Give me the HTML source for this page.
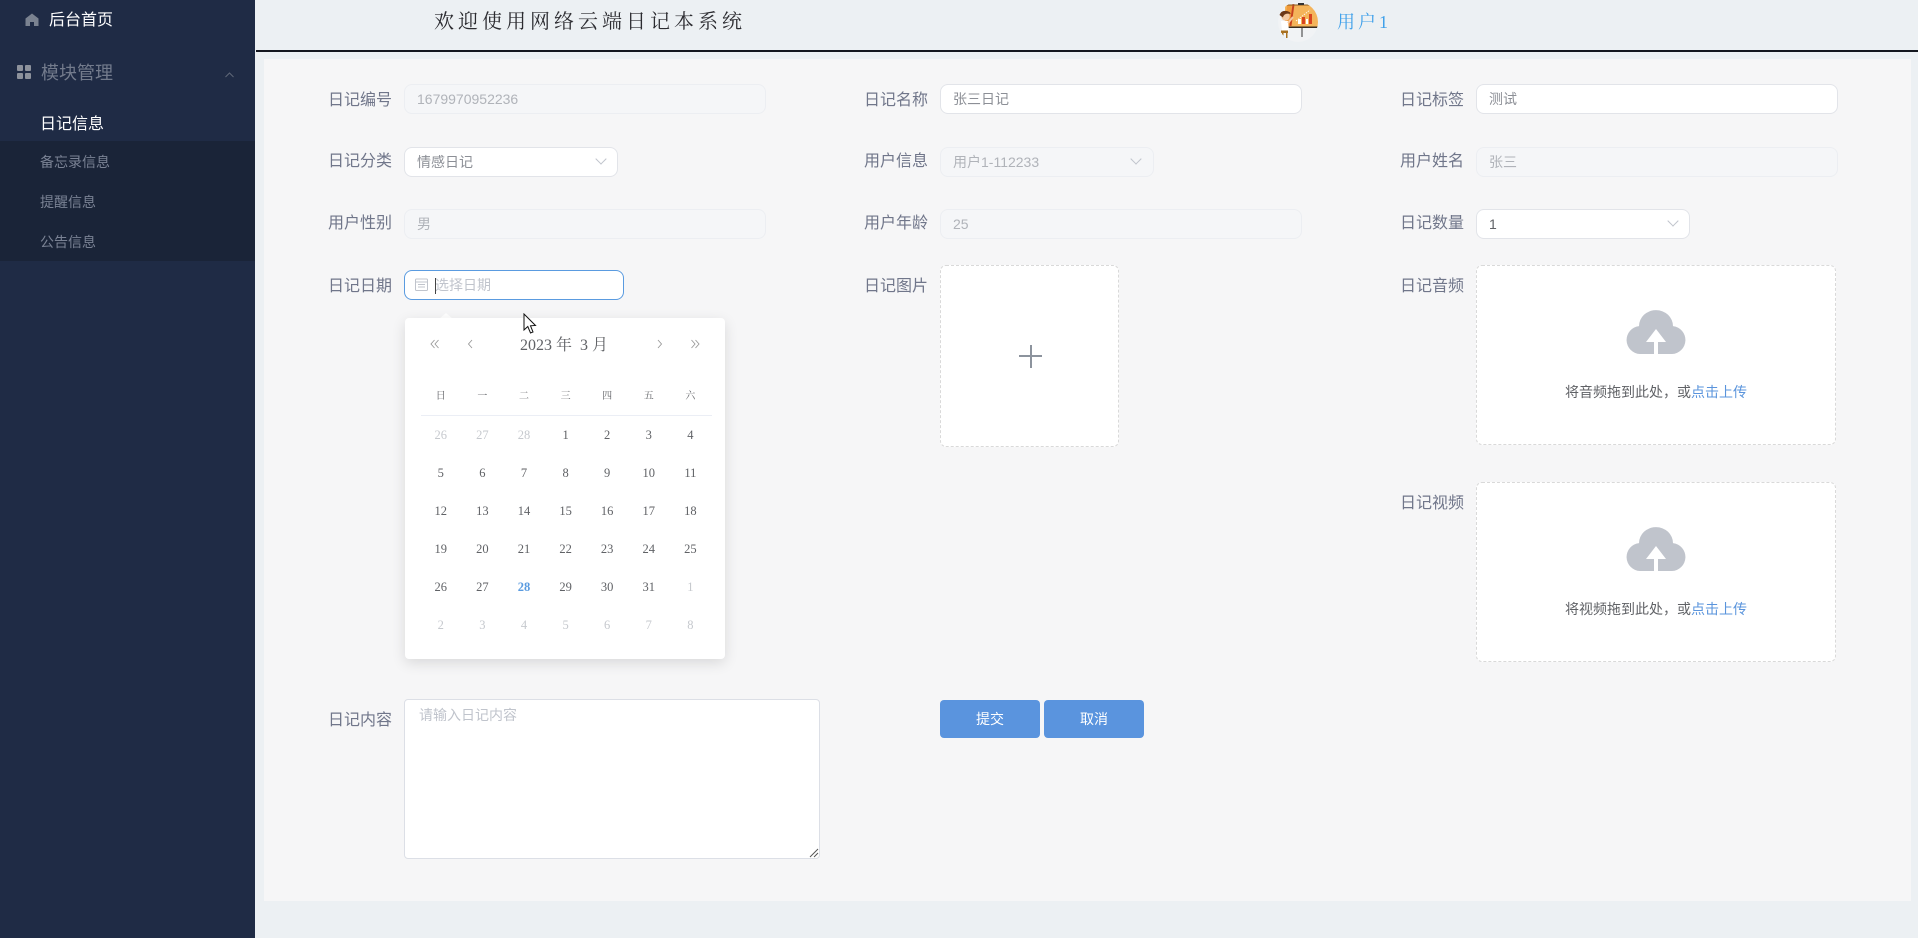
<!DOCTYPE html>
<html lang="zh">
<head>
<meta charset="utf-8">
<title>日记信息</title>
<style>
html,body{margin:0;padding:0;width:1918px;height:938px;overflow:hidden;background:#ecf0f3;font-family:"Liberation Sans","Noto Sans CJK SC",sans-serif}
*{box-sizing:border-box}
.a{position:absolute}
.t{position:absolute;white-space:nowrap}
#side{left:0;top:0;width:255px;height:938px;background:#1f2b45}
#sub{left:0;top:141px;width:255px;height:120px;background:#1a2438}
#main{left:264px;top:59px;width:1647px;height:842px;background:#f6f6f7}
#line{left:256px;top:50px;width:1662px;height:2px;background:#14171f}
.lab{position:absolute;width:69px;margin-top:1px;text-align:right;font-size:16px;line-height:30px;height:30px;color:#70768a;white-space:nowrap}
.inp{position:absolute;height:30px;border:1px solid #e2e4e9;background:#fff;border-radius:8px;font-size:14px;line-height:29px;padding-left:12px;color:#8c8f96;white-space:nowrap}
.dis{background:#f5f6f8;border-color:#eceef2;color:#b0b3b9}
.chev{position:absolute;width:8px;height:8px;border-right:1px solid #c0c4cc;border-bottom:1px solid #c0c4cc;transform:rotate(45deg)}
.box{position:absolute;background:#fff;border:1px dashed #d9d9d9;border-radius:6px}
.up{position:absolute;font-size:14px;color:#606266;text-align:center;line-height:20px;white-space:nowrap}
.up b{font-weight:normal;color:#5a94dc}
#cal{left:405px;top:318px;width:320px;height:341px;background:#fff;border-radius:4px;box-shadow:0 4px 14px rgba(0,0,0,.12)}
.row{position:absolute;left:420px;width:291.2px;display:flex;height:20px;line-height:20px;font-family:"Liberation Serif","Noto Serif CJK SC",serif;font-size:12.5px;color:#606266;text-align:center}
.row span{flex:1}
.row i{flex:1;font-style:normal;color:#c6c9ce}
.row b{flex:1;color:#5a9be0}
.wk{font-size:10px;color:#606266}
.btn{position:absolute;top:700px;width:100px;height:38px;background:#5a94de;border-radius:4px;color:#fff;font-size:14px;line-height:38px;text-align:center}
</style>
</head>
<body>
<div class="a" id="side"></div>
<div class="a" id="sub"></div>
<div class="a" id="line"></div>
<div class="a" id="main"></div>

<!-- sidebar -->
<svg class="a" style="left:25px;top:13px" width="14" height="14" viewBox="0 0 14 14"><path d="M7 0.5 L13.5 5.5 V13 H9 V9 H5 V13 H0.5 V5.5 Z" fill="#7a8290"/></svg>
<div class="t" style="left:49px;top:11px;font-size:16px;line-height:20px;color:#fff">后台首页</div>
<svg class="a" style="left:17px;top:65px" width="14" height="14" viewBox="0 0 14 14"><g fill="#8d929c"><rect width="6" height="6" rx="1"/><rect x="8" width="6" height="6" rx="1"/><rect y="8" width="6" height="6" rx="1"/><rect x="8" y="8" width="6" height="6" rx="1"/></g></svg>
<div class="t" style="left:41px;top:62px;font-size:18px;line-height:22px;color:#737b8c">模块管理</div>
<svg class="a" style="left:225px;top:72px" width="9" height="6" viewBox="0 0 9 6"><path d="M0.5 5 L4.5 1 L8.5 5" fill="none" stroke="#5f6778" stroke-width="1"/></svg>
<div class="t" style="left:40px;top:115px;font-size:16px;line-height:20px;color:#fff">日记信息</div>
<div class="t" style="left:40px;top:152px;font-size:14px;line-height:20px;color:#7a8294">备忘录信息</div>
<div class="t" style="left:40px;top:192px;font-size:14px;line-height:20px;color:#7a8294">提醒信息</div>
<div class="t" style="left:40px;top:232px;font-size:14px;line-height:20px;color:#7a8294">公告信息</div>

<!-- header -->
<div class="t" style="left:434px;top:9px;font-family:'Liberation Serif','Noto Serif CJK SC',serif;font-size:20px;line-height:26px;letter-spacing:4px;color:#2b2b30">欢迎使用网络云端日记本系统</div>
<svg class="a" style="left:1278px;top:2px" width="40" height="40" viewBox="0 0 40 40">
<defs><clipPath id="c"><circle cx="20" cy="20" r="20"/></clipPath></defs>
<g clip-path="url(#c)">
<rect width="40" height="40" fill="#f1f3f5"/>
<rect x="7" y="3" width="33" height="22" fill="#f4b45a"/>
<path d="M9 3 H14 L12 24 H7 Z" fill="#f09a3a"/>
<rect x="13" y="2" width="2" height="22" fill="#c8421f" transform="rotate(8 14 13)"/>
<rect x="7" y="2.5" width="33" height="1" fill="#8a5a20"/>
<rect x="20" y="1" width="6" height="2" fill="#333"/>
<rect x="7" y="24.5" width="33" height="1.5" fill="#3a2c1e"/>
<rect x="23.5" y="26" width="1" height="9" fill="#333"/>
<rect x="20" y="17" width="3" height="5" fill="#fff"/><rect x="24" y="15" width="3" height="7" fill="#d8431f"/><rect x="28" y="17" width="2" height="5" fill="#fff"/><rect x="31" y="12" width="3" height="10" fill="#d8431f"/>
<path d="M18 19 L32 8" stroke="#fff" stroke-width="0.8" stroke-dasharray="1.5 1"/>
<path d="M3 19 H10 L11 29 H4 Z" fill="#fff"/>
<path d="M10 21 L15 15" stroke="#f3c9a3" stroke-width="2"/>
<circle cx="7.5" cy="14.5" r="4.2" fill="#f3c9a3"/>
<path d="M1.5 13 Q3 8 9 9 Q13 10 12.5 12 Q6 10.5 5 15.5 Z" fill="#6b3718"/>
<rect x="3" y="28.5" width="7" height="2.5" fill="#a8701f"/>
<rect x="4" y="30" width="1.5" height="6" fill="#a8701f"/><rect x="8" y="30" width="1.5" height="6" fill="#a8701f"/>
</g></svg>
<div class="t" style="left:1337px;top:9px;font-family:'Liberation Serif','Noto Serif CJK SC',serif;font-size:18px;line-height:26px;letter-spacing:3px;color:#3fa0ea">用户1</div>

<!-- row 1 -->
<div class="lab" style="left:323px;top:85px">日记编号</div>
<div class="inp dis" style="left:404px;top:84px;width:362px">1679970952236</div>
<div class="lab" style="left:859px;top:85px">日记名称</div>
<div class="inp" style="left:940px;top:84px;width:362px">张三日记</div>
<div class="lab" style="left:1395px;top:85px">日记标签</div>
<div class="inp" style="left:1476px;top:84px;width:362px">测试</div>

<!-- row 2 -->
<div class="lab" style="left:323px;top:146px">日记分类</div>
<div class="inp" style="left:404px;top:146.5px;width:214px">情感日记</div>
<div class="chev" style="left:597px;top:155px"></div>
<div class="lab" style="left:859px;top:146px">用户信息</div>
<div class="inp dis" style="left:940px;top:146.5px;width:214px">用户1-112233</div>
<div class="chev" style="left:1132px;top:155px"></div>
<div class="lab" style="left:1395px;top:146px">用户姓名</div>
<div class="inp dis" style="left:1476px;top:146.5px;width:362px">张三</div>

<!-- row 3 -->
<div class="lab" style="left:323px;top:208px">用户性别</div>
<div class="inp dis" style="left:404px;top:208.5px;width:362px">男</div>
<div class="lab" style="left:859px;top:208px">用户年龄</div>
<div class="inp dis" style="left:940px;top:208.5px;width:362px">25</div>
<div class="lab" style="left:1395px;top:208px">日记数量</div>
<div class="inp" style="left:1476px;top:208.5px;width:214px;color:#606266">1</div>
<div class="chev" style="left:1669px;top:217px"></div>

<!-- row 4 -->
<div class="lab" style="left:323px;top:271px">日记日期</div>
<div class="inp" style="left:404px;top:270px;width:220px;border-color:#5a9be0;padding-left:30px;color:#c0c4cc">选择日期</div>
<svg class="a" style="left:415px;top:278px" width="13" height="13" viewBox="0 0 13 13"><rect x="0.5" y="1" width="12" height="11.5" rx="1" fill="none" stroke="#c0c4cc"/><path d="M0.5 4H12.5M3 6.5H10M3 9H10" stroke="#c0c4cc" fill="none"/></svg>
<div class="a" style="left:435px;top:278px;width:1px;height:16px;background:#444"></div>

<!-- calendar -->
<svg class="a" style="left:438px;top:312px" width="16" height="7" viewBox="0 0 16 7"><path d="M1 7 L8 1 L15 7 Z" fill="#fff"/></svg>
<div class="a" id="cal"></div>
<svg class="a" style="left:430px;top:339px" width="10" height="10" viewBox="0 0 10 10"><path d="M4.5 1L1 5L4.5 9M8.5 1L5 5L8.5 9" fill="none" stroke="#999" stroke-width="0.9"/></svg>
<svg class="a" style="left:467px;top:339px" width="7" height="10" viewBox="0 0 7 10"><path d="M5 1L1.5 5L5 9" fill="none" stroke="#999" stroke-width="0.9"/></svg>
<div class="t" style="left:520px;top:335px;width:88px;text-align:center;font-family:'Liberation Serif','Noto Serif CJK SC',serif;font-size:16px;line-height:22px;color:#606266">2023 年&nbsp; 3 月</div>
<svg class="a" style="left:656px;top:339px" width="7" height="10" viewBox="0 0 7 10"><path d="M2 1L5.5 5L2 9" fill="none" stroke="#999" stroke-width="0.9"/></svg>
<svg class="a" style="left:690px;top:339px" width="10" height="10" viewBox="0 0 10 10"><path d="M1.5 1L5 5L1.5 9M5.5 1L9 5L5.5 9" fill="none" stroke="#999" stroke-width="0.9"/></svg>

<div class="row wk" style="top:387px"><span>日</span><span>一</span><span>二</span><span>三</span><span>四</span><span>五</span><span>六</span></div>
<div class="a" style="left:421px;top:415px;width:291px;height:1px;background:#ebeef5"></div>
<div class="row" style="top:424.5px"><i>26</i><i>27</i><i>28</i><span>1</span><span>2</span><span>3</span><span>4</span></div>
<div class="row" style="top:462.5px"><span>5</span><span>6</span><span>7</span><span>8</span><span>9</span><span>10</span><span>11</span></div>
<div class="row" style="top:500.5px"><span>12</span><span>13</span><span>14</span><span>15</span><span>16</span><span>17</span><span>18</span></div>
<div class="row" style="top:538.5px"><span>19</span><span>20</span><span>21</span><span>22</span><span>23</span><span>24</span><span>25</span></div>
<div class="row" style="top:576.5px"><span>26</span><span>27</span><b>28</b><span>29</span><span>30</span><span>31</span><i>1</i></div>
<div class="row" style="top:614.5px"><i>2</i><i>3</i><i>4</i><i>5</i><i>6</i><i>7</i><i>8</i></div>

<!-- cursor -->
<svg class="a" style="left:523px;top:313px" width="15" height="22" viewBox="0 0 15 22"><path d="M1 1 V17 L4.8 13.5 L7.5 20 L10 19 L7.5 12.8 L12.5 12.5 Z" fill="#fff" stroke="#111" stroke-width="1"/></svg>

<!-- image upload -->
<div class="lab" style="left:859px;top:271px">日记图片</div>
<div class="box" style="left:940px;top:265px;width:179px;height:182px"></div>
<div class="a" style="left:1019px;top:355px;width:23px;height:1.5px;background:#8c939d"></div>
<div class="a" style="left:1030px;top:344.5px;width:1.5px;height:23px;background:#8c939d"></div>

<!-- audio -->
<div class="lab" style="left:1395px;top:271px">日记音频</div>
<div class="box" style="left:1476px;top:265px;width:360px;height:180px"></div>
<svg class="a" style="left:1626px;top:310px" width="60" height="44" viewBox="0 0 60 44"><path d="M14 44 A14 14 0 0 1 13 16.1 A17 16 0 0 1 47 16.1 A14 14 0 0 1 46 44 Z" fill="#c0c4cc"/><path d="M30 19 L20 32 H28 V44 H32 V32 H40 Z" fill="#fff"/></svg>
<div class="up" style="left:1476px;top:382px;width:360px">将音频拖到此处，或<b>点击上传</b></div>

<!-- video -->
<div class="lab" style="left:1395px;top:488px">日记视频</div>
<div class="box" style="left:1476px;top:482px;width:360px;height:180px"></div>
<svg class="a" style="left:1626px;top:527px" width="60" height="44" viewBox="0 0 60 44"><path d="M14 44 A14 14 0 0 1 13 16.1 A17 16 0 0 1 47 16.1 A14 14 0 0 1 46 44 Z" fill="#c0c4cc"/><path d="M30 19 L20 32 H28 V44 H32 V32 H40 Z" fill="#fff"/></svg>
<div class="up" style="left:1476px;top:599px;width:360px">将视频拖到此处，或<b>点击上传</b></div>

<!-- content -->
<div class="lab" style="left:323px;top:705px">日记内容</div>
<div class="a" style="left:404px;top:699px;width:416px;height:160px;background:#fff;border:1px solid #dcdfe6;border-radius:4px"></div>
<div class="t" style="left:419px;top:705px;font-size:14px;line-height:20px;color:#c0c4cc">请输入日记内容</div>
<svg class="a" style="left:809px;top:848px" width="10" height="10" viewBox="0 0 10 10"><path d="M1 9L9 1M5 9L9 5" stroke="#555" stroke-width="1" fill="none"/></svg>

<div class="btn" style="left:940px">提交</div>
<div class="btn" style="left:1044px">取消</div>
</body>
</html>
